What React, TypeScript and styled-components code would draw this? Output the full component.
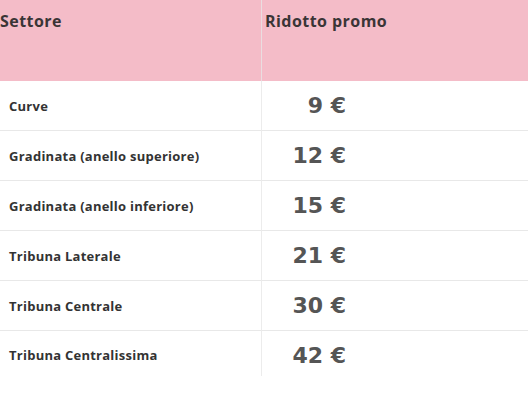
import React from "react";
import styled, { createGlobalStyle } from "styled-components";

const GlobalStyle = createGlobalStyle`
  body {
    margin: 0;
    background: #ffffff;
    font-family: "Open Sans", "Liberation Sans", sans-serif;
  }
`;

const Table = styled.div`
  display: grid;
  grid-template-columns: 261px 1fr;
  width: 100%;
`;

const HeadCell = styled.div<{ $divider?: boolean }>`
  height: 81px;
  box-sizing: border-box;
  background: #f4bcc8;
  padding: 10px 0 0 ${(p) => (p.$divider ? "3px" : "0")};
  border-left: ${(p) => (p.$divider ? "1px solid #eadde0" : "none")};
  font-size: 16px;
  font-weight: 700;
  letter-spacing: 0.45px;
  color: #3a3536;
`;

const Cell = styled.div<{ $divider?: boolean; $last?: boolean }>`
  height: ${(p) => (p.$last ? "45px" : "50px")};
  box-sizing: border-box;
  display: flex;
  align-items: ${(p) => (p.$last ? "flex-start" : "center")};
  padding-top: ${(p) => (p.$last ? "10px" : "0")};
  border-bottom: ${(p) => (p.$last ? "none" : "1px solid #e8e8e8")};
  border-left: ${(p) => (p.$divider ? "1px solid #ececec" : "none")};
  padding-left: 9px;
`;

const Sector = styled.span<{ $last?: boolean }>`
  font-size: 13px;
  font-weight: 700;
  letter-spacing: 0.25px;
  color: #333333;
  margin-top: ${(p) => (p.$last ? "5px" : "0")};
`;

const Price = styled.span`
  display: inline-block;
  width: 75px;
  text-align: right;
  font-family: "DejaVu Sans", "Open Sans", sans-serif;
  font-size: 22px;
  font-weight: 700;
  color: #555555;
  line-height: 30px;
`;

const rows = [
  { sector: "Curve", price: "9 €" },
  { sector: "Gradinata (anello superiore)", price: "12 €" },
  { sector: "Gradinata (anello inferiore)", price: "15 €" },
  { sector: "Tribuna Laterale", price: "21 €" },
  { sector: "Tribuna Centrale", price: "30 €" },
  { sector: "Tribuna Centralissima", price: "42 €" },
];

const App: React.FC = () => {
  return (
    <>
      <GlobalStyle />
      <Table>
        <HeadCell>Settore</HeadCell>
        <HeadCell $divider>Ridotto promo</HeadCell>
        {rows.map((r, i) => {
          const last = i === rows.length - 1;
          return (
            <React.Fragment key={r.sector}>
              <Cell $last={last}>
                <Sector $last={last}>{r.sector}</Sector>
              </Cell>
              <Cell $divider $last={last}>
                <Price>{r.price}</Price>
              </Cell>
            </React.Fragment>
          );
        })}
      </Table>
    </>
  );
};

export default App;
